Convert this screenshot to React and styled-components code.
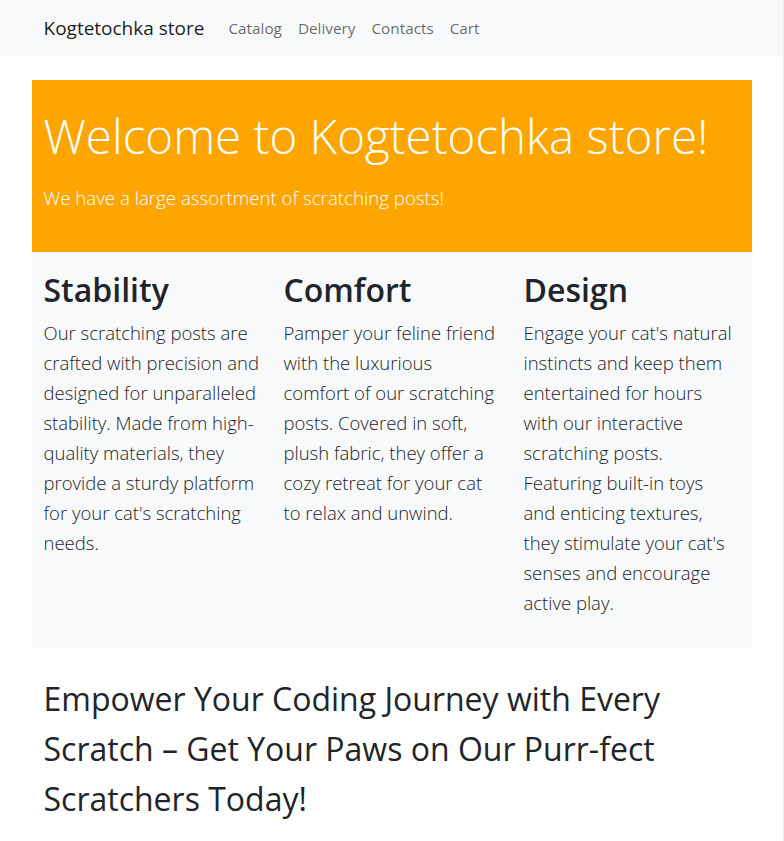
import React from 'react';
import styled, { createGlobalStyle } from 'styled-components';

const GlobalStyle = createGlobalStyle`
  html {
    border-right: 1px solid #ececec;
  }
  body {
    margin: 0;
    font-family: "Open Sans", "Noto Sans", sans-serif;
    color: #212529;
    background: #fff;
  }
`;

const Nav = styled.nav`
  height: 56px;
  background: #f8f9fa;
`;

const NavInner = styled.div`
  width: 720px;
  margin: 0 auto;
  padding: 0 12px;
  box-sizing: border-box;
  height: 100%;
  display: flex;
  align-items: center;
`;

const Brand = styled.a`
  font-size: 19px;
  color: rgba(0, 0, 0, 0.9);
  margin-right: 16px;
  text-decoration: none;
`;

const NavLink = styled.a`
  font-size: 15.3px;
  padding: 0 8px;
  color: rgba(0, 0, 0, 0.6);
  text-decoration: none;
`;

const Container = styled.main`
  width: 720px;
  margin: 24px auto 0;
`;

const Hero = styled.section`
  background: #ffa500;
  color: #fff;
  padding: 27px 12px 39px;
`;

const HeroTitle = styled.h1`
  margin: 0 0 18px;
  font-size: 47.5px;
  font-weight: 300;
  line-height: 57.6px;
  white-space: nowrap;
`;

const Lead = styled.p`
  margin: 0;
  font-size: 18.7px;
  font-weight: 300;
  line-height: 30px;
`;

const Features = styled.section`
  background: #f8f9fa;
  display: grid;
  grid-template-columns: repeat(3, 1fr);
  padding: 19px 0 30px;
`;

const Feature = styled.div`
  padding: 0 12px;
`;

const FeatureTitle = styled.h2`
  margin: 0 0 9px;
  font-size: 32px;
  font-weight: 600;
  line-height: 38px;
`;

const FeatureText = styled.p`
  margin: 0;
  font-size: 18.5px;
  font-weight: 300;
  line-height: 30px;
  color: #212529;
`;

const Line = styled.span`
  display: block;
  white-space: nowrap;
`;

const Slogan = styled.h2`
  margin: 0;
  padding: 26px 12px 20px;
  font-size: 32px;
  font-weight: 400;
  line-height: 50px;
`;

const features = [
  {
    title: 'Stability',
    lines: [
      'Our scratching posts are',
      'crafted with precision and',
      'designed for unparalleled',
      'stability. Made from high-',
      'quality materials, they',
      'provide a sturdy platform',
      "for your cat's scratching",
      'needs.',
    ],
  },
  {
    title: 'Comfort',
    lines: [
      'Pamper your feline friend',
      'with the luxurious',
      'comfort of our scratching',
      'posts. Covered in soft,',
      'plush fabric, they offer a',
      'cozy retreat for your cat',
      'to relax and unwind.',
    ],
  },
  {
    title: 'Design',
    lines: [
      "Engage your cat's natural",
      'instincts and keep them',
      'entertained for hours',
      'with our interactive',
      'scratching posts.',
      'Featuring built-in toys',
      'and enticing textures,',
      "they stimulate your cat's",
      'senses and encourage',
      'active play.',
    ],
  },
];

export default function App() {
  return (
    <>
      <GlobalStyle />
      <Nav>
        <NavInner>
          <Brand href="#">Kogtetochka store</Brand>
          <NavLink href="#">Catalog</NavLink>
          <NavLink href="#">Delivery</NavLink>
          <NavLink href="#">Contacts</NavLink>
          <NavLink href="#">Cart</NavLink>
        </NavInner>
      </Nav>
      <Container>
        <Hero>
          <HeroTitle>Welcome to Kogtetochka store!</HeroTitle>
          <Lead>We have a large assortment of scratching posts!</Lead>
        </Hero>
        <Features>
          {features.map(f => (
            <Feature key={f.title}>
              <FeatureTitle>{f.title}</FeatureTitle>
              <FeatureText>
                {f.lines.map(l => (
                  <Line key={l}>{l}</Line>
                ))}
              </FeatureText>
            </Feature>
          ))}
        </Features>
        <Slogan>
          Empower Your Coding Journey with Every
          <br />
          Scratch – Get Your Paws on Our Purr-fect
          <br />
          Scratchers Today!
        </Slogan>
      </Container>
    </>
  );
}
